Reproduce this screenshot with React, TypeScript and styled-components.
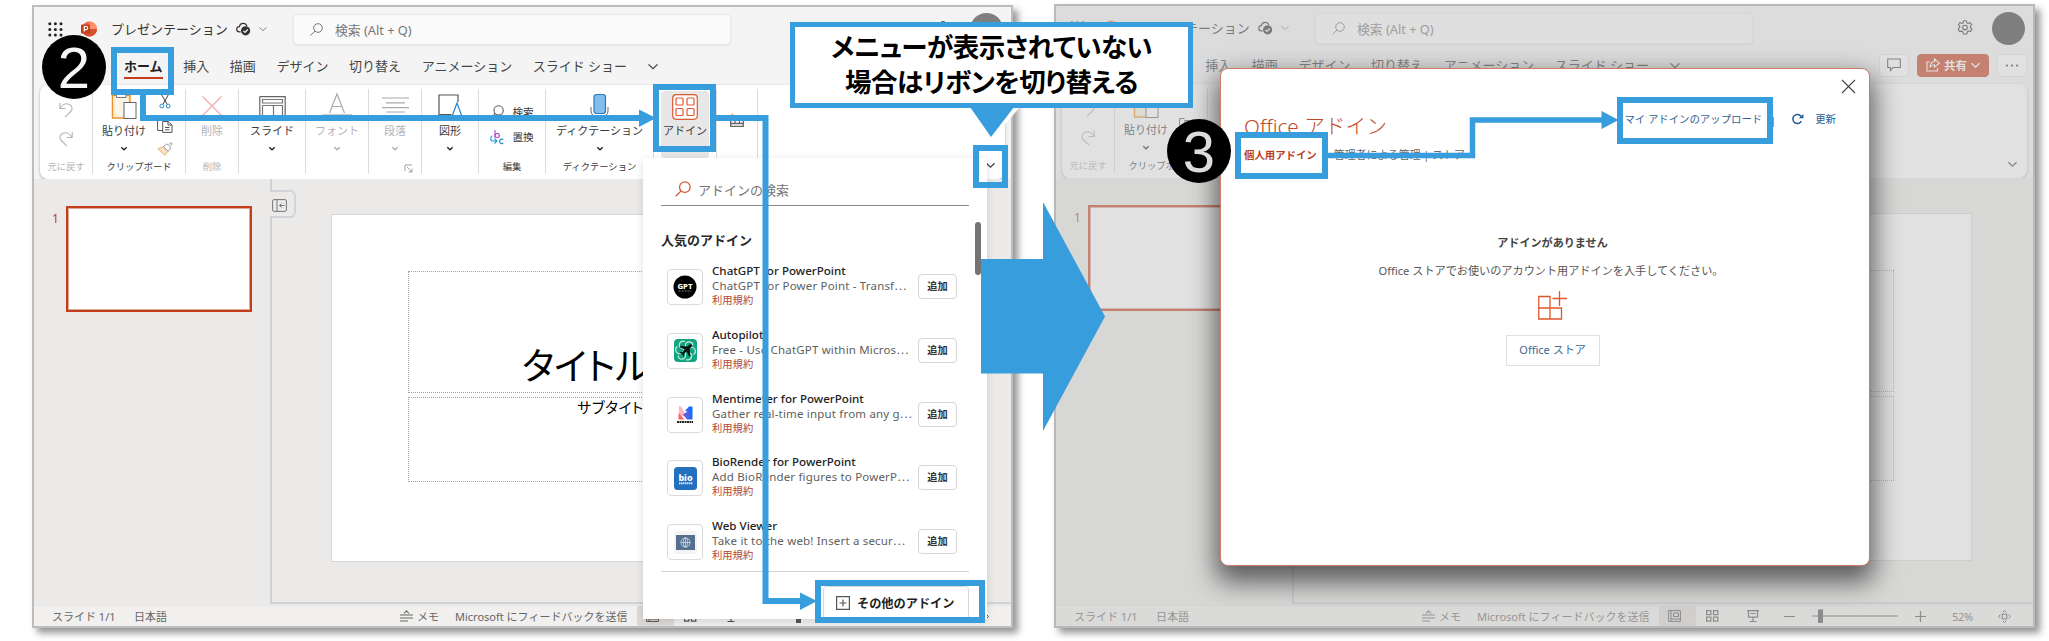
import React from 'react';
import styled, { createGlobalStyle, css } from 'styled-components';

const BLUE = '#379ddd';
const RED = '#c43e1c';

const GlobalStyle = createGlobalStyle`
  * { box-sizing: border-box; }
  body {
    margin: 0;
    background: #fff;
    overflow: hidden;
    color: #444;
    font-family: 'Noto Sans', 'Noto Sans CJK JP', sans-serif;
  }
  svg { display: block; flex: none; overflow: visible; }
`;

const Board = styled.main`
  position: relative;
  width: 2049px;
  height: 641px;
  display: flex;
  align-items: flex-start;
  gap: 41px;
  padding: 5px 0 0 32px;
  overflow: hidden;
`;

/* ---------- editor window ---------- */

const Window = styled.section<{ $dimmed?: boolean }>`
  position: relative;
  flex: none;
  width: 981px;
  height: ${p => (p.$dimmed ? 624 : 623)}px;
  margin-top: ${p => (p.$dimmed ? -1 : 0)}px;
  display: flex;
  flex-direction: column;
  border: 2px solid ${p => (p.$dimmed ? '#b9b9b9' : '#bdbdbd')};
  background: #f4f4f4;
  box-shadow: 5px 5px 7px rgba(0, 0, 0, 0.42);
`;

const Dimmer = styled.div`
  position: absolute;
  inset: 0;
  background: rgba(195, 195, 195, 0.5);
`;

const TitleBar = styled.header`
  height: 44px;
  flex: none;
  display: flex;
  align-items: center;
  padding: 0 8px 0 14px;
`;

const DocName = styled.span`
  margin: 0 7px 0 14px;
  width: 118px;
  font-size: 13px;
  line-height: 20px;
  white-space: nowrap;
  color: #333;
`;

const TitleGap = styled.div`
  width: 8px;
`;

const SearchBox = styled.div`
  width: 438px;
  height: 31px;
  margin-left: 26px;
  display: flex;
  align-items: center;
  gap: 12px;
  padding-left: 16px;
  border: 1px solid #e9e9e9;
  border-radius: 4px;
  background: #fafafa;
  box-shadow: 0 1px 2px rgba(0, 0, 0, 0.08);
  font-size: 12.8px;
  color: #777;
  white-space: nowrap;
`;

const Spacer = styled.div`
  flex: 1;
`;

const Avatar = styled.div`
  position: relative;
  z-index: 2;
  width: 33px;
  height: 33px;
  margin-left: 19px;
  border-radius: 50%;
  background: #7f7f7f;
`;

const TabRow = styled.nav`
  height: 34px;
  flex: none;
  display: flex;
  align-items: center;
  gap: 20.6px;
  padding: 0 6px 4px 90px;
`;

const Tab = styled.span<{ $active?: boolean }>`
  font-size: 13px;
  line-height: 22px;
  white-space: nowrap;
  color: #444;
  ${p =>
    p.$active &&
    css`
      color: #222;
      font-weight: 700;
      box-shadow: 0 2px 0 ${RED};
    `}
`;

const TabActions = styled.div`
  margin-left: auto;
  display: flex;
  gap: 8px;
`;

const ActionButton = styled.div<{ $primary?: boolean }>`
  width: ${p => (p.$primary ? 72 : 30)}px;
  height: 23px;
  display: flex;
  align-items: center;
  justify-content: center;
  gap: 4px;
  border: 1px solid ${p => (p.$primary ? RED : '#e2e2e2')};
  border-radius: 4px;
  background: ${p => (p.$primary ? RED : '#fff')};
  color: ${p => (p.$primary ? '#fff' : '#333')};
  font-size: 11.4px;
  font-weight: ${p => (p.$primary ? 700 : 400)};
`;

const Ribbon = styled.div`
  height: 94px;
  flex: none;
  display: flex;
  margin: 0 6px;
  padding-top: 4px;
  border-radius: 8px;
  background: #fff;
  box-shadow: 0 1px 3px rgba(0, 0, 0, 0.3);
`;

const Group = styled.div<{ $w: number; $muted?: boolean }>`
  position: relative;
  width: ${p => p.$w}px;
  height: 85px;
  display: flex;
  flex-direction: column;
  align-items: center;
  padding-top: 3px;
  border-right: 1px solid #dcdcdc;
  color: ${p => (p.$muted ? '#b4b4b4' : '#3a3a3a')};
`;

const GroupRow = styled.div`
  display: flex;
  width: 100%;
  padding-left: 9px;
  gap: 11px;
`;

const Stack = styled.div<{ $gap?: number; $top?: number }>`
  display: flex;
  flex-direction: column;
  align-items: center;
  gap: ${p => p.$gap ?? 0}px;
  padding-top: ${p => p.$top ?? 0}px;
`;

const ClipTools = styled.div`
  display: flex;
  flex-direction: column;
  align-items: center;
  justify-content: space-between;
  height: 64px;
  padding-top: 2px;
`;

const IconSlot = styled.div`
  height: 28px;
  display: flex;
  align-items: center;
  justify-content: center;
`;

const ToolLabel = styled.span`
  margin-top: 3px;
  font-size: 11px;
  line-height: 16px;
  white-space: nowrap;
`;

const ChevronSlot = styled.div`
  height: 18px;
  display: flex;
  align-items: center;
`;

const GroupName = styled.span`
  margin-top: auto;
  font-size: 9.3px;
  line-height: 14px;
  white-space: nowrap;
`;

const Launcher = styled.div`
  position: absolute;
  right: 8px;
  bottom: 1px;
`;

const AddinButton = styled.div`
  width: 48px;
  height: 67px;
  margin-top: -1px;
  padding-top: 3px;
  display: flex;
  flex-direction: column;
  align-items: center;
  border-radius: 4px;
  background: #e7e7e7;
`;

const InlineTool = styled.div`
  display: flex;
  align-items: center;
  gap: 8px;
  font-size: 10.6px;
  line-height: 16px;
`;

const RibbonEnd = styled.div`
  margin-left: auto;
  padding: 74px 10px 0 0;
`;

/* ---------- document area ---------- */

const Workspace = styled.div`
  flex: 1;
  display: flex;
  min-height: 0;
  background: #ebeae8;
`;

const ThumbPane = styled.aside`
  width: 236px;
  display: flex;
  align-items: flex-start;
  gap: 9px;
  padding: 27px 0 0 18px;
  color: ${RED};
  font-size: 12px;
`;

const ThumbNumber = styled.span`
  width: 8px;
  line-height: 16px;
  margin-top: 5px;
`;

const Thumb = styled.div`
  width: 186px;
  height: 106px;
  margin-left: -3px;
  border: 2.5px solid ${RED};
  background: #fff;
  box-shadow: inset 0 0 0 1px #dca79a;
`;

const Canvas = styled.div`
  position: relative;
  flex: 1;
  margin-bottom: 1px;
  padding: 35px 0 0 59px;
  border-left: 2px solid #cfd1d5;
  border-bottom: 2px solid #cfd3d7;
`;

const PaneToggle = styled.div`
  position: absolute;
  left: -2px;
  top: 11px;
  width: 26px;
  height: 28px;
  padding: 7px 0 0 2px;
  border: 2px solid #d2d4d7;
  border-left: 0;
  border-radius: 0 6px 6px 0;
  background: #ebeae8;
`;

const Slide = styled.div`
  width: 619px;
  height: 348px;
  padding: 56px 77px 0 76px;
  border: 1px solid #d6d6d6;
  background: #fff;
  color: #000;
  text-align: center;
  white-space: nowrap;
  font-feature-settings: 'palt';
`;

const TitleHolder = styled.div`
  height: 122px;
  display: flex;
  align-items: flex-end;
  justify-content: center;
  border: 1px dotted #a2a2a2;
  font-size: 37px;
  line-height: 52px;
`;

const SubtitleHolder = styled.div`
  height: 85px;
  margin-top: 4px;
  border: 1px dotted #a2a2a2;
  font-size: 14.6px;
  line-height: 19px;
  letter-spacing: 0.6px;
`;

const StatusBar = styled.footer`
  height: 21px;
  flex: none;
  display: flex;
  align-items: center;
  padding-left: 18px;
  border-top: 1px solid #e6e6e6;
  background: #f1f0ef;
  font-size: 11px;
  color: #666;
  white-space: nowrap;
`;

const StatusItem = styled.span<{ $w: number; $tight?: boolean }>`
  width: ${p => p.$w}px;
  display: flex;
  align-items: center;
  letter-spacing: ${p => (p.$tight ? '-0.25px' : '0')};
`;

const ActiveView = styled.div`
  width: 37px;
  height: 20px;
  display: flex;
  align-items: center;
  padding-left: 9px;
  background: #dddad8;
  margin-right: 10px;
`;

/* ---------- add-in flyout ---------- */

const Flyout = styled.div`
  position: absolute;
  left: 609px;
  top: 151px;
  width: 344px;
  height: 461px;
  display: flex;
  flex-direction: column;
  padding: 15px 18px 0;
  background: #fff;
  box-shadow: 0 2px 8px rgba(0, 0, 0, 0.13);
  overflow: hidden;
`;

const FlyoutSearch = styled.div`
  width: 308px;
  height: 33px;
  flex: none;
  display: flex;
  align-items: center;
  gap: 7px;
  padding: 0 0 0 14px;
  border-bottom: 1px solid #8a8a8a;
  font-size: 13px;
  color: #757575;
`;

const FlyoutTitle = styled.h2`
  margin: 23px 0 12px;
  font-size: 13px;
  line-height: 22px;
  font-weight: 700;
  color: #2a2a2a;
`;

const ScrollThumb = styled.div`
  position: absolute;
  right: 6px;
  top: 64px;
  width: 6px;
  height: 53px;
  border-radius: 3px;
  background: #767472;
`;

const AddinRow = styled.div`
  height: 63.8px;
  flex: none;
  display: flex;
  align-items: flex-start;
  padding-left: 6px;
`;

const AddinTile = styled.div`
  width: 36px;
  height: 36px;
  margin-top: 6px;
  display: flex;
  align-items: center;
  justify-content: center;
  border: 1px solid #dadada;
  border-radius: 4px;
`;

const AddinText = styled.div`
  width: 215px;
  padding-left: 9px;
  white-space: nowrap;
`;

const AddinName = styled.div`
  font-size: 11.6px;
  line-height: 15px;
  font-weight: 500;
  color: #222;
`;

const AddinDesc = styled.div`
  font-size: 11.5px;
  line-height: 14px;
  letter-spacing: 0.18px;
  color: #606060;
`;

const Dots = styled.span`
  font-family: 'Noto Sans CJK JP', sans-serif;
`;

const AddinTerms = styled.div`
  font-size: 10.3px;
  line-height: 15px;
  color: #b0472f;
`;

const AddButton = styled.div`
  width: 39px;
  height: 25px;
  margin-top: 11px;
  border: 1px solid #d6d6d6;
  border-radius: 4px;
  font-size: 10.2px;
  line-height: 22px;
  font-weight: 700;
  text-align: center;
  color: #333;
`;

const FlyoutFoot = styled.div`
  width: 308px;
  height: 60px;
  flex: none;
  display: flex;
  justify-content: flex-end;
  border-top: 1px solid #d2d2d2;
  margin-top: -11px;
  padding-top: 14px;
`;

const MoreAddins = styled.div`
  width: 146px;
  height: 38px;
  display: flex;
  align-items: center;
  gap: 7px;
  padding: 0 0 4px 12px;
  border: 1px solid #d8d8d8;
  border-radius: 4px;
  font-size: 12.2px;
  font-weight: 700;
  color: #222;
  white-space: nowrap;
`;

/* ---------- dialog ---------- */

const Dialog = styled.div`
  position: absolute;
  z-index: 3;
  left: 164px;
  top: 62px;
  width: 650px;
  height: 498px;
  display: flex;
  flex-direction: column;
  padding: 10px 13px 0 23px;
  border: 1px solid #cd7d67;
  border-radius: 8px;
  background: #fff;
  box-shadow: 0 12px 26px 4px rgba(0, 0, 0, 0.58);
`;

const DialogTop = styled.div`
  height: 14px;
  display: flex;
  justify-content: flex-end;
`;

const DialogHead = styled.div`
  display: flex;
  height: 53px;
  align-items: flex-start;
  justify-content: space-between;
`;

const DialogTitle = styled.h1`
  margin: 16px 0 0;
  font-size: 20.7px;
  line-height: 34px;
  font-weight: 300;
  color: #c24a28;
  white-space: nowrap;
`;

const DialogLinks = styled.div`
  display: flex;
  align-items: center;
  margin: 16px 20px 0 0;
  font-size: 10.4px;
  line-height: 20px;
  color: #2f6296;
  white-space: nowrap;
`;

const Pipe = styled.i`
  width: 1px;
  height: 10px;
  margin: 6px 17px 0 11px;
  background: #999;
`;

const RefreshLabel = styled.span`
  margin-left: 11px;
`;

const DialogTabs = styled.div`
  display: flex;
  gap: 17px;
  margin-top: -1px;
  font-size: 10.4px;
  line-height: 20px;
  color: #666;
  white-space: nowrap;
`;

const CurrentTab = styled.span`
  color: #bb3d1c;
  font-weight: 700;
`;

const OtherTabs = styled.span`
  font-size: 10.9px;
`;

const EmptyState = styled.div`
  display: flex;
  flex-direction: column;
  align-items: center;
  padding: 68px 0 0 5px;
  color: #555;
  white-space: nowrap;
`;

const EmptyTitle = styled.div`
  font-size: 11.1px;
  line-height: 20px;
  font-weight: 700;
  color: #444;
`;

const EmptyText = styled.div`
  margin: 8px 0 10px;
  padding-right: 3px;
  font-size: 11.15px;
  line-height: 20px;
`;

const StoreButton = styled.div`
  width: 94px;
  height: 31px;
  margin-top: 15px;
  border: 1px solid #e0e0e0;
  font-size: 11px;
  line-height: 28px;
  text-align: center;
  color: #446890;
`;

/* ---------- annotations ---------- */

const Highlight = styled.div<{ $x: number; $y: number; $w: number; $h: number }>`
  position: absolute;
  z-index: 5;
  left: ${p => p.$x}px;
  top: ${p => p.$y}px;
  width: ${p => p.$w}px;
  height: ${p => p.$h}px;
  border: 6px solid ${BLUE};
`;

const Arrows = styled.svg`
  position: absolute;
  z-index: 4;
  left: 0;
  top: 0;
`;

const Callout = styled.div`
  position: absolute;
  z-index: 6;
  left: 790px;
  top: 22px;
  width: 403px;
  height: 86px;
  padding-top: 3px;
  border: 5px solid ${BLUE};
  background: #fff;
  color: #000;
  font-size: 26.5px;
  font-weight: 700;
  line-height: 35px;
  letter-spacing: -0.5px;
  text-align: center;
  white-space: nowrap;
  font-feature-settings: 'palt';
`;

const StepBadge = styled.div<{ $x: number; $y: number; $ink: string }>`
  position: absolute;
  z-index: 6;
  left: ${p => p.$x}px;
  top: ${p => p.$y}px;
  width: 64px;
  height: 64px;
  border-radius: 50%;
  background: #000;
  color: ${p => p.$ink};
  font-family: 'Liberation Sans', sans-serif;
  font-size: 58px;
  line-height: 65px;
  text-align: center;
`;

/* ---------- icons ---------- */

const Chevron = ({ w = 8, color = '#444', sw = 1.3 }: { w?: number; color?: string; sw?: number }) => (
  <svg width={w} height={w / 2} viewBox="0 0 8 4" fill="none" stroke={color} strokeWidth={(sw * 8) / w}>
    <path d="M.4.3 4 3.7 7.6.3" />
  </svg>
);

const Waffle = () => (
  <svg width="15" height="15" fill="#222">
    {[0, 1, 2].flatMap(r => [0, 1, 2].map(c => <circle key={`${r}${c}`} cx={1.8 + c * 5.6} cy={1.8 + r * 5.6} r="1.5" />))}
  </svg>
);

const PptSvg = styled.svg`
  margin-left: 18px;
`;

const PptIcon = () => (
  <PptSvg width="16" height="16" viewBox="0 0 16 16">
    <circle cx="8.4" cy="8" r="7.6" fill="#ed6c47" />
    <path d="M8.4.4A7.6 7.6 0 0 1 16 8H8.4z" fill="#ff8f6b" />
    <path d="M.8 8H16a7.6 7.6 0 0 1-15.2 0z" fill="#d35230" />
    <rect x="0" y="3.6" width="9" height="9" rx="1" fill="#c43e1c" />
    <path d="M3.3 10.6V5.5h1.9a1.5 1.5 0 0 1 0 3.1H3.5" fill="none" stroke="#fff" strokeWidth="1.2" />
  </PptSvg>
);

const CloudIcon = () => (
  <svg width="15" height="14" viewBox="0 0 15 14">
    <path d="M4.600 9.800H3.300A2.600 2.600 0 0 1 3.400 4.600 3.900 3.900 0 0 1 10.900 4" fill="none" stroke="#333" strokeWidth="1.2" />
    <circle cx="9.6" cy="8.8" r="4.6" fill="#333" />
    <path d="m7.400 8.900 1.600 1.600 2.800-3" fill="none" stroke="#fff" strokeWidth="1.1" />
  </svg>
);

const Magnifier = ({ size = 13, color = '#777' }: { size?: number; color?: string }) => (
  <svg width={size} height={size} viewBox="0 0 13 13" fill="none" stroke={color} strokeWidth="1">
    <circle cx="8" cy="5" r="4.3" />
    <path d="M4.900 8.100.5 12.500" />
  </svg>
);

const GearIcon = () => (
  <svg width="16" height="16" viewBox="0 0 16 16" fill="none" stroke="#333" strokeWidth="1.1" strokeLinejoin="round">
    <path d="m6.600.8 2.800 0 .5 2 1.200.6 2-.9 1.600 2.200-1.300 1.600v1.400l1.500 1.300-1.300 2.400-2-.4-1.200.8-.6 2.200H6.400l-.6-2.100-1.200-.8-2.100.5-1.300-2.500 1.500-1.400V6.300L1.300 4.700 2.900 2.500 4.900 3.400 6.100 2.800z" />
    <circle cx="8" cy="7.6" r="2.3" />
  </svg>
);

const UndoIcon = ({ flip }: { flip?: boolean }) => (
  <svg width="14" height="16" viewBox="0 0 14 16" fill="none" stroke="#b5b5b5" strokeWidth="1.1">
    <g transform={flip ? 'translate(14 0) scale(-1 1)' : undefined}>
      <path d="M.8.8v5.700h5.700M1 6.200C3.500 2.600 7 .8 10.400 2.500c3 1.500 3.600 4.800 1.400 7L6 15.200" />
    </g>
  </svg>
);

const PasteIcon = () => (
  <svg width="26" height="26" viewBox="0 0 26 26" fill="none">
    <path d="M13 25H1.500V2.500H19V9" stroke="#e8912d" strokeWidth="1.500" />
    <path d="M3 4h14.500v6H13v13H3z" fill="#fdf6e8" stroke="#f4d9a4" strokeWidth=".7" />
    <path d="M5.500 4.500v-3h2C8-.8 12.500-.8 13 1.500h2v3z" fill="#fff" stroke="#777" />
    <rect x="13" y="9.500" width="12" height="16" fill="#fff" stroke="#666" />
  </svg>
);

const CutIcon = () => (
  <svg width="12" height="15" viewBox="0 0 12 15" fill="none">
    <path d="M2.500.5 8 10.200M9.500.5 4 10.200" stroke="#444" />
    <circle cx="2.800" cy="12" r="1.900" stroke="#2b88c8" />
    <circle cx="9.200" cy="12" r="1.900" stroke="#2b88c8" />
  </svg>
);

const CopyIcon = () => (
  <svg width="16" height="14" viewBox="0 0 16 14" fill="#fff" stroke="#555" strokeWidth="1">
    <path d="M6 11.500H.6V.6h5" />
    <path d="M5.700 2.500h5.500L15 6v7.400H5.700zM11 2.500V6h4M8 8.500h4.500M8 10.800h4.500" />
  </svg>
);

const BrushIcon = () => (
  <svg width="16" height="14" viewBox="0 0 16 14" fill="none">
    <path d="M.8 6.800 6 4.500l5 4.800-3 4z" fill="#fbe0c0" stroke="#e9b98a" />
    <path d="m6.500 4.500 3-2.500 1.800 1.200L14 .6 15.300 2l-2.600 2.600 1 2-2.500 2.800z" fill="#fff" stroke="#999" />
  </svg>
);

const DeleteIcon = () => (
  <svg width="20" height="20" fill="none" stroke="#f1a9a9" strokeWidth="1.100">
    <path d="m.5.5 19 19M19.500.5l-19 19" />
  </svg>
);

const SlideIcon = () => (
  <svg width="27" height="20" viewBox="0 0 27 20" fill="none" stroke="#666" strokeWidth="1.200">
    <path d="M.8.600h25.400v22M.8.600v22" />
    <path d="M3.500 3.500h20v3.500h-20zM3.500 9.500h20V22M3.500 9.500V22M14.500 9.500V22" stroke="#777" />
  </svg>
);

const FontIcon = () => (
  <svg width="30" height="28" viewBox="0 0 30 28" fill="none" stroke="#aaa" strokeWidth="1.200">
    <path d="M7.500 21 15 2l7.500 19M10 14.500h10" />
    <path d="M0 25h30" stroke="#9a9a9a" strokeWidth="5" />
  </svg>
);

const ParagraphIcon = () => (
  <svg width="27" height="20" fill="none" stroke="#aaa" strokeWidth="1.200">
    <path d="M0 2h27M4 6.800h19M0 11.600h27M4 16h19" />
  </svg>
);

const ShapesIcon = () => (
  <svg width="25" height="24" viewBox="0 0 25 24" fill="none">
    <path d="M13.500 20.500H1V1h19v7" stroke="#555" strokeWidth="1.200" />
    <path d="M14 22.500 19 9l5 13.500z" fill="#fff" stroke="#2b88c8" strokeWidth="1.300" />
  </svg>
);

const ReplaceIcon = () => (
  <svg width="14" height="15" viewBox="0 0 14 15" fill="none" strokeWidth="1.200">
    <path d="M5 0v7.500" stroke="#b553c6" />
    <circle cx="7.200" cy="5.400" r="2.100" stroke="#b553c6" />
    <path d="M13.200 9.700a2.200 2.200 0 1 0 0 3.300" stroke="#2b88c8" />
    <path d="M2.300 5.800C0 7 .2 11 3 11h3.500M4.500 8.500 7 11l-2.500 2.500" stroke="#2b9be0" />
  </svg>
);

const MicIcon = () => (
  <svg width="19" height="28" viewBox="0 0 19 28" fill="none">
    <path d="M1 15v4c0 3 2 5 5 5h7c3 0 5-2 5-5v-4M9.500 24v4" stroke="#666" />
    <rect x="4" y="2.500" width="11.500" height="19" rx="2.500" fill="#83bdec" stroke="#2878be" strokeWidth="1.200" />
  </svg>
);

const AddinIcon = () => (
  <svg width="26" height="26" viewBox="0 0 26 26" fill="#fff" stroke="#e0592f" strokeWidth="1.200">
    <rect x=".7" y=".7" width="24.600" height="24.600" rx="3.500" />
    {[[4, 4], [15, 4], [4, 14.5], [15, 14.5]].map(([x, y]) => (
      <rect key={`${x}-${y}`} x={x} y={y} width="7" height="7" rx="1" />
    ))}
  </svg>
);

const DesignerIcon = () => (
  <svg width="14" height="14" viewBox="0 0 14 14" fill="none" stroke="#666" strokeWidth="1.300">
    <path d="M.7 8v5.300h12.600V5H7M.7 10.500h12.600M5 8v3M9.500 5v5.500" />
    <path d="m2 .5 1 2.300 2.300.7L3 4.500 2 7" stroke="#f09a3e" />
  </svg>
);

const LauncherIcon = () => (
  <svg width="9" height="9" fill="none" stroke="#999" strokeWidth=".9">
    <path d="M1 7V1h7M3 3l5 5M8 4.500V8H4.500" />
  </svg>
);

const PaneIcon = () => (
  <svg width="15" height="13" viewBox="0 0 15 13" fill="none" stroke="#777" strokeWidth="1">
    <rect x=".6" y=".6" width="13.800" height="11.800" rx="1.500" />
    <path d="M5 .6v11.800M12.500 6.500h-5M9.500 4.500l-2 2 2 2" />
  </svg>
);

const NotesIcon = () => (
  <svg width="13" height="12" fill="none" stroke="#666" strokeWidth="1.100">
    <path d="M4 3.500 6.500.8 9 3.500M0 5h13M0 8h13M0 11h8" />
  </svg>
);

const ZoomControls = () => (
  <svg width="305" height="20" viewBox="0 0 305 20" fill="none" stroke="#555" strokeWidth="1.200">
    <path d="M.6 4.600h4.300v4H.6zM7.500 4.600h4.300v4H7.500zM.6 11.200h4.300v4H.6zM7.500 11.200h4.300v4H7.500z" />
    <path d="M41 4.600h12M42.500 5v6.200h9V5M47 11v4.500M43.500 15.500h7M44.500 7.500h5" />
    <path d="M78 10.500h11M106 10h86M209 10.500h11M214.500 5v11" />
    <path d="M112 3.500h5v13.500h-5z" fill="#555" stroke="none" />
  </svg>
);

const FitIcon = () => (
  <svg width="13" height="13" viewBox="0 0 13 13" fill="none" stroke="#555" strokeWidth="1">
    <rect x="4.200" y="4.200" width="4.600" height="4.600" />
    <path d="M4.700 2.300 6.500.6l1.800 1.700M4.700 10.700l1.800 1.700 1.800-1.700M2.300 4.700.6 6.500l1.700 1.800M10.700 4.700l1.700 1.800-1.700 1.800" />
  </svg>
);

const NormalViewIcon = () => (
  <svg width="13" height="12" viewBox="0 0 13 12" fill="none" stroke="#555">
    <path d="M.6.6h11.800v10.800H.6zM3 .6v10.800M3 9h9.400M5.500 3h5v3.500h-5z" />
  </svg>
);

const LogoText = styled.text`
  font-family: 'Noto Sans', sans-serif;
  font-weight: 800;
  text-anchor: middle;
`;

const GptLogo = () => (
  <svg width="24" height="24">
    <circle cx="12" cy="12" r="11.500" fill="#000" />
    <LogoText x="12" y="14" fontSize="7.800" fill="#fff">GPT</LogoText>
    <path d="M5.500 16h13" stroke="#777" strokeDasharray="2 1" />
  </svg>
);

const AutopilotLogo = () => (
  <svg width="23" height="23" viewBox="0 0 23 23">
    <rect width="23" height="23" rx="4" fill="#12a37f" />
    <g fill="none" stroke="#c9f0e4" strokeWidth="1.200">
      {[0, 60, 120, 180, 240, 300].map(a => (
        <path key={a} d="M11.500 11.500V6c0-4 7-4.500 7.500.5" transform={`rotate(${a} 11.500 11.500)`} />
      ))}
    </g>
    <path d="M17.500 5.500c-1.500-.6-3 .8-4 2L6.500 7l-.8 1.200 5 2.300-2.200 2.700-2-.2-.8.900 2.400 1.200 1.200 2.400.9-.8-.2-2 2.700-2.200 2.300 5 1.200-.8-.5-7c1.300-1 2.600-2.500 1.800-4.200z" fill="#0a1512" />
  </svg>
);

const MentimeterLogo = () => (
  <svg width="20" height="21" viewBox="0 0 20 21">
    <path d="M4 2c2 0 2.500 1 3.500 3L11 12H4z" fill="#ffb3c7" />
    <path d="m10 7 4-4.500h3.500V15.500H14V8z" fill="#196cff" />
    <path d="m3.500 9 6 6.500h-6z" fill="#ff5b66" />
    <path d="m8 10.500 6-4v9h-2z" fill="#5b5fe0" />
    <path d="M2 18h16" stroke="#222" strokeWidth="1.800" strokeDasharray="2 .5" />
  </svg>
);

const BioLogo = () => (
  <svg width="23" height="23">
    <rect width="23" height="23" rx="3.500" fill="#2470bd" />
    <LogoText x="11.500" y="13.500" fontSize="9" fill="#fff">bio</LogoText>
    <path d="M5 16.200h13.500" stroke="#cfe1f5" strokeWidth="2" strokeDasharray="1.500 .5" />
  </svg>
);

const WebLogo = () => (
  <svg width="23" height="23" viewBox="0 0 23 23" fill="none">
    <rect width="23" height="23" rx="3" fill="#f4f4f4" />
    <rect x="2" y="4" width="19" height="15" fill="#55708f" />
    <g stroke="#c5d2df" strokeWidth=".9">
      <circle cx="11.500" cy="11.500" r="4.600" />
      <ellipse cx="11.500" cy="11.500" rx="2.100" ry="4.600" />
      <path d="M7 11.500h9M11.500 7v9" />
    </g>
  </svg>
);

const PlusBox = () => (
  <svg width="14" height="14" fill="none" stroke="#555" strokeWidth="1.200">
    <path d="M.6.600h12.800v12.800H.6zM7 3.500v7M3.500 7h7" />
  </svg>
);

const CloseIcon = () => (
  <svg width="15" height="15" fill="none" stroke="#444" strokeWidth="1.100">
    <path d="m1 1 13 13M14 1 1 14" />
  </svg>
);

const RefreshIcon = () => (
  <svg width="13" height="12" viewBox="0 0 13 12" fill="none" stroke="#23598f" strokeWidth="1.500">
    <path d="M10.300 8.200A4.500 4.500 0 1 1 10 3.300" />
    <path d="M12.400 1v4.300H7.800z" fill="#23598f" stroke="none" />
  </svg>
);

const StoreIcon = () => (
  <svg width="29" height="29" viewBox="0 0 29 29" fill="none" stroke="#e2552a" strokeWidth="1.300">
    <path d="M.8 5.500H12V28H.8zM.8 17H23.500V28H.8M21.500 0v15M14.500 7.500H29" />
  </svg>
);

const CommentIcon = () => (
  <svg width="14" height="14" viewBox="0 0 14 14" fill="none" stroke="#444" strokeWidth="1.100">
    <path d="M.7 1h12.600v8.500H6L3.500 12.500v-3H.7z" />
  </svg>
);

const ShareIcon = () => (
  <svg width="14" height="14" viewBox="0 0 14 14" fill="none" stroke="#fff" strokeWidth="1.100">
    <path d="M4 4H1v9h10.500v-3M8.500 1l4.800 4.200-4.800 4V6.800C6.300 6.800 5 7.800 3.800 9.500 4.200 6 5.800 3.800 8.500 3.500z" />
  </svg>
);

const MoreIcon = () => (
  <svg width="14" height="3" fill="#333">
    <circle cx="2" cy="1.500" r="1.100" />
    <circle cx="7" cy="1.500" r="1.100" />
    <circle cx="12" cy="1.500" r="1.100" />
  </svg>
);

/* ---------- composition ---------- */

interface ToolProps {
  w: number;
  icon: React.ReactNode;
  label: string;
  name?: string;
  muted?: boolean;
  chevron?: boolean;
  launcher?: boolean;
}

const ToolGroup = ({ w, icon, label, name, muted, chevron = true, launcher }: ToolProps) => (
  <Group $w={w} $muted={muted}>
    <IconSlot>{icon}</IconSlot>
    <ToolLabel>{label}</ToolLabel>
    <ChevronSlot>{chevron && <Chevron w={6} color={muted ? '#aaa' : '#222'} />}</ChevronSlot>
    {name && <GroupName>{name}</GroupName>}
    {launcher && <Launcher><LauncherIcon /></Launcher>}
  </Group>
);

const TABS = ['ホーム', '挿入', '描画', 'デザイン', '切り替え', 'アニメーション', 'スライド ショー'];

const Editor = ({ dimmed, children }: { dimmed?: boolean; children?: React.ReactNode }) => (
  <Window $dimmed={dimmed}>
    <TitleBar>
      <Waffle />
      <PptIcon />
      <DocName>プレゼンテーション</DocName>
      <CloudIcon />
      <TitleGap />
      <Chevron w={8} color="#888" sw={1} />
      <SearchBox><Magnifier />検索 (Alt + Q)</SearchBox>
      <Spacer />
      <GearIcon />
      <Avatar />
    </TitleBar>
    <TabRow>
      {TABS.map((t, i) => <Tab key={t} $active={i === 0}>{t}</Tab>)}
      <Chevron w={10} />
      <TabActions>
        <ActionButton><CommentIcon /></ActionButton>
        <ActionButton $primary><ShareIcon />共有<Chevron w={9} color="#fff" /></ActionButton>
        <ActionButton><MoreIcon /></ActionButton>
      </TabActions>
    </TabRow>
    <Ribbon>
      <Group $w={53} $muted>
        <Stack $gap={13} $top={10}><UndoIcon /><UndoIcon flip /></Stack>
        <GroupName>元に戻す</GroupName>
      </Group>
      <Group $w={93}>
        <GroupRow>
          <Stack>
            <IconSlot><PasteIcon /></IconSlot>
            <ToolLabel>貼り付け</ToolLabel>
            <ChevronSlot><Chevron w={6} color="#222" /></ChevronSlot>
          </Stack>
          <ClipTools><CutIcon /><CopyIcon /><BrushIcon /></ClipTools>
        </GroupRow>
        <GroupName>クリップボード</GroupName>
      </Group>
      <ToolGroup w={53} icon={<DeleteIcon />} label="削除" name="削除" muted chevron={false} />
      <ToolGroup w={67} icon={<SlideIcon />} label="スライド" />
      <ToolGroup w={63} icon={<FontIcon />} label="フォント" muted />
      <ToolGroup w={53} icon={<ParagraphIcon />} label="段落" muted launcher />
      <ToolGroup w={57} icon={<ShapesIcon />} label="図形" />
      <Group $w={67}>
        <Stack $gap={9} $top={12}>
          <InlineTool><Magnifier size={14} color="#555" />検索</InlineTool>
          <InlineTool><ReplaceIcon />置換</InlineTool>
        </Stack>
        <GroupName>編集</GroupName>
      </Group>
      <ToolGroup w={108} icon={<MicIcon />} label="ディクテーション" name="ディクテーション" />
      <Group $w={63}>
        <AddinButton>
          <AddinIcon />
          <ToolLabel>アドイン</ToolLabel>
        </AddinButton>
      </Group>
      <Group $w={41}><Stack $top={21}><DesignerIcon /></Stack></Group>
      <RibbonEnd><Chevron w={9} /></RibbonEnd>
    </Ribbon>
    <Workspace>
      <ThumbPane>
        <ThumbNumber>1</ThumbNumber>
        <Thumb />
      </ThumbPane>
      <Canvas>
        <PaneToggle><PaneIcon /></PaneToggle>
        <Slide>
          <TitleHolder>タイトルを入力</TitleHolder>
          <SubtitleHolder>サブタイトルを入力</SubtitleHolder>
        </Slide>
      </Canvas>
    </Workspace>
    <StatusBar>
      <StatusItem $w={82}>スライド 1/1</StatusItem>
      <StatusItem $w={266}>日本語</StatusItem>
      <StatusItem $w={17}><NotesIcon /></StatusItem>
      <StatusItem $w={38}>メモ</StatusItem>
      <StatusItem $w={182}>Microsoft にフィードバックを送信</StatusItem>
      <ActiveView><NormalViewIcon /></ActiveView>
      <StatusItem $w={246}><ZoomControls /></StatusItem>
      <StatusItem $w={46} $tight>52%</StatusItem>
      <FitIcon />
    </StatusBar>
    {dimmed && <Dimmer />}
    {children}
  </Window>
);

const ADDINS = [
  { name: 'ChatGPT for PowerPoint', desc: 'ChatGPT for Power Point - Transf', logo: <GptLogo /> },
  { name: 'Autopilot', desc: 'Free - Use ChatGPT within Micros', logo: <AutopilotLogo /> },
  { name: 'Mentimeter for PowerPoint', desc: 'Gather real-time input from any g', logo: <MentimeterLogo /> },
  { name: 'BioRender for PowerPoint', desc: 'Add BioRender figures to PowerP', logo: <BioLogo /> },
  { name: 'Web Viewer', desc: 'Take it to the web! Insert a secur', logo: <WebLogo /> },
];

export default function App() {
  return (
    <>
      <GlobalStyle />
      <Board>
        <Editor>
          <Flyout>
            <FlyoutSearch><Magnifier size={16} color="#d0532f" />アドインの検索</FlyoutSearch>
            <FlyoutTitle>人気のアドイン</FlyoutTitle>
            {ADDINS.map(a => (
              <AddinRow key={a.name}>
                <AddinTile>{a.logo}</AddinTile>
                <AddinText>
                  <AddinName>{a.name}</AddinName>
                  <AddinDesc>{a.desc}<Dots>…</Dots></AddinDesc>
                  <AddinTerms>利用規約</AddinTerms>
                </AddinText>
                <AddButton>追加</AddButton>
              </AddinRow>
            ))}
            <FlyoutFoot>
              <MoreAddins><PlusBox />その他のアドイン</MoreAddins>
            </FlyoutFoot>
            <ScrollThumb />
          </Flyout>
        </Editor>
        <Editor dimmed>
          <Dialog>
            <DialogTop><CloseIcon /></DialogTop>
            <DialogHead>
              <DialogTitle>Office アドイン</DialogTitle>
              <DialogLinks>
                <span>マイ アドインのアップロード</span>
                <Pipe />
                <RefreshIcon />
                <RefreshLabel>更新</RefreshLabel>
              </DialogLinks>
            </DialogHead>
            <DialogTabs>
              <CurrentTab>個人用アドイン</CurrentTab>
              <OtherTabs>管理者による管理 | ストア</OtherTabs>
            </DialogTabs>
            <EmptyState>
              <EmptyTitle>アドインがありません</EmptyTitle>
              <EmptyText>Office ストアでお使いのアカウント用アドインを入手してください。</EmptyText>
              <StoreIcon />
              <StoreButton>Office ストア</StoreButton>
            </EmptyState>
          </Dialog>
        </Editor>

        <Arrows width="2049" height="641">
          <g fill="none" stroke={BLUE} strokeWidth="6">
            <path d="M143 92v26h500" />
            <path d="M714 118h51.500v483H802" />
            <path d="M1326 155.500h146.500V120H1604" strokeWidth="5.500" />
          </g>
          <g fill={BLUE}>
            <path d="M639 109.500 656 118l-17 9z" />
            <path d="m800 592.500 17 8.500-17 9z" />
            <path d="m1601.500 111 17 9-17 9z" />
            <path d="M981 259h62V202l62 114.500L1043 431v-57.500h-62z" />
          </g>
          <path d="M1013 108h6l-26 31-2-2z" fill="#fff" />
          <path d="M970 107h44l-23 30z" fill={BLUE} />
        </Arrows>

        <Highlight $x={111} $y={47} $w={63} $h={48} />
        <Highlight $x={653} $y={84} $w={63} $h={68} />
        <Highlight $x={973} $y={145} $w={35} $h={43} />
        <Highlight $x={815} $y={580} $w={170} $h={43} />
        <Highlight $x={1235} $y={132} $w={93} $h={47} />
        <Highlight $x={1617} $y={97} $w={156} $h={47} />

        <Callout>
          メニューが表示されていない
          <br />
          場合はリボンを切り替える
        </Callout>
        <StepBadge $x={42} $y={35} $ink="#f7f7f7">2</StepBadge>
        <StepBadge $x={1167} $y={119} $ink="#dcdcdc">3</StepBadge>
      </Board>
    </>
  );
}
